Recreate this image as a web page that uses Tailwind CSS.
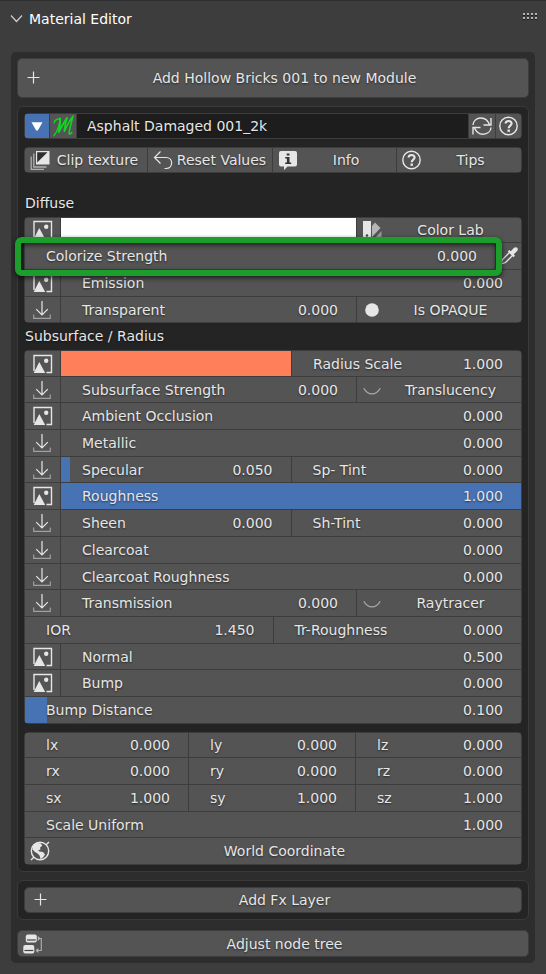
<!DOCTYPE html>
<html lang="en">
<head>
<meta charset="utf-8">
<meta name="viewport" content="width=device-width, initial-scale=1">
<title>Material Editor</title>
<script src="https://cdn.jsdelivr.net/npm/@tailwindcss/browser@4"></script>
</head>
<body class="min-h-screen bg-[#3d3d3d] font-['DejaVu_Sans',sans-serif] text-[14px] leading-5 text-[#e6e6e6] [text-shadow:0_1px_2px_#0008]">

<!-- Icon set -->
<svg class="hidden" aria-hidden="true">
  <symbol id="i-image" viewBox="0 0 20 20">
    <path d="M1 17V1.500H18.500V18.500H13.500" fill="none" stroke="#e6e6e6" stroke-width="1.400"/>
    <path d="M.7 19 6.300 8 12.200 19Z" fill="#e6e6e6"/><circle cx="13.200" cy="6.700" r="2.200" fill="#e6e6e6"/>
  </symbol>
  <symbol id="i-import" viewBox="0 0 20 20">
    <path d="M9 1V15M3.200 9.200 9 15 14.800 9.200" fill="none" stroke="#e6e6e6" stroke-width="1.200"/>
    <path d="M.7 14.500V18.300H17.300V14.500" fill="none" stroke="#a0a0a0" stroke-width="1.200"/>
  </symbol>
  <symbol id="i-plus" viewBox="0 0 20 20"><path d="M10.500 3.500V15.500M4.500 9.500H16.500" stroke="#e6e6e6" stroke-width="1.200"/></symbol>
  <symbol id="i-help" viewBox="0 0 20 20">
    <circle cx="9.500" cy="10" r="8.700" fill="none" stroke="#e6e6e6" stroke-width="1.400"/>
    <path d="M6.600 7.600C6.600 4.300 12.600 4.200 12.600 7.500C12.600 9.600 9.700 9.700 9.700 12.200" fill="none" stroke="#e6e6e6" stroke-width="2.100"/>
    <rect x="8.500" y="13.500" width="2.400" height="2.400" fill="#e6e6e6"/>
  </symbol>
  <symbol id="i-closed-eye" viewBox="0 0 20 20"><path d="M1.800 8.200C6 15.800 14 15.800 18.200 8.200" fill="none" stroke="#a8a8a8" stroke-width="1.300"/></symbol>
</svg>

<header class="flex items-center border-t border-[#303030] pt-2 pr-[9px] pl-[10px]">
  <button class="flex items-center gap-[6px] text-white" aria-expanded="true">
    <svg class="h-[14px] w-[13px]" viewBox="0 0 13 14"><path d="M1 3.500 6.500 9.500 12 3.500" fill="none" stroke="#cfcfcf" stroke-width="1.200"/></svg>
    Material Editor
  </button>
  <svg class="mr-0 mb-1 ml-auto h-[10px] w-[14px]" viewBox="0 0 14 10" aria-hidden="true">
    <g fill="#1c1c1c"><path d="M0 3h2v1H0zM4 3h2v1H4zM8 3h2v1H8zM12 3h2v1H12zM0 7h2v1H0zM4 7h2v1H4zM8 7h2v1H8zM12 7h2v1H12z"/></g>
    <g fill="#b4b4b4"><path d="M0 1h2v2H0zM4 1h2v2H4zM8 1h2v2H8zM12 1h2v2H12zM0 5h2v2H0zM4 5h2v2H4zM8 5h2v2H8zM12 5h2v2H12z"/></g>
  </svg>
</header>

<main class="mx-[11px] mt-[23px] mb-[10px] flex flex-col rounded-[5px] bg-[#2d2d2d] p-[6px]
  [&_input]:min-w-0 [&_input]:[text-shadow:0_1px_2px_#0008]
  [&_button]:min-w-0 [&_button]:whitespace-nowrap [&_button]:bg-[#545454] [&_button]:[text-shadow:0_1px_2px_#0008]
  [&_label]:relative [&_label]:flex [&_label]:min-w-0 [&_label]:flex-1 [&_label]:items-center [&_label]:bg-[#545454] [&_label]:pr-[18px] [&_label]:pl-[21px] [&_label]:whitespace-nowrap
  [&_label>span]:relative [&_label>input]:relative [&_label>input]:ml-auto [&_label>input]:w-12 [&_label>input]:text-right">

  <button class="flex h-10 items-center rounded-[5px] border border-[#3d3d3d] pl-[5px]">
    <svg class="-mr-0.5 size-5 shrink-0"><use href="#i-plus"/></svg><span class="flex-1">Add Hollow Bricks 001 to new Module</span>
  </button>

  <section class="mt-2 rounded-[6px] border border-[#3a3a3a] bg-[#242424] p-[6px]">
    <div class="flex h-[26px] gap-px overflow-hidden rounded-[5px] bg-[#3d3d3d] p-px">
      <button class="flex w-6 items-center justify-center bg-[#4772b3]!" aria-label="Collapse material">
        <svg class="h-[9px] w-3" viewBox="0 0 12 9"><path d="M.5 .3H11.500L6.800 8.400H5.200Z" fill="#fff"/></svg>
      </button>
      <button class="flex w-[26px] items-center justify-center" aria-label="Material library">
        <svg class="h-[22px] w-[22px]" viewBox="0 0 22 22"><g fill="none" stroke="#14d424" stroke-linecap="round" stroke-linejoin="round"><path d="M2.200 8C2.200 5 5 4 8.200 3.500C7.500 9 6 16 2 20.500" stroke-width="1.300"/><path d="M8.200 3.500C8.200 8 7.500 13 6.800 17C9.500 12 12 7 15 3" stroke-width="1.900"/><path d="M15 3C13.500 8 12.500 12 12.300 16.500C15 10.500 17.500 5 21 1.200C19.500 7 17.500 14 17 18.500C17.800 19.500 19 18.600 19.800 17.500" stroke-width="1.600"/></g></svg>
      </button>
      <input class="flex-1 bg-[#1d1d1d] pl-[10px] outline-none" aria-label="Material name" value="Asphalt Damaged 001_2k">
      <button class="flex w-[26px] items-center justify-center" aria-label="Refresh">
        <svg class="size-5" viewBox="0 0 20 20"><path d="M1 9C1.500 1 13.500-1.500 17.500 8.500M19 2V9H11.500M19 11.500C18.500 19 6.500 21.500 2.500 12M1 18.500V11.500H8.500" fill="none" stroke="#e6e6e6" stroke-width="1.400"/></svg>
      </button>
      <button class="flex w-[25px] items-center justify-center" aria-label="Help"><svg class="size-5"><use href="#i-help"/></svg></button>
    </div>

    <div class="mt-2 grid h-[26px] grid-cols-[122fr_124fr_123fr_124fr] gap-px overflow-hidden rounded-[5px] bg-[#3d3d3d] p-px">
      <button class="flex items-center pl-[5px]">
        <svg class="-mr-0.5 size-5 shrink-0" viewBox="0 0 20 20"><rect x="6" y="1" width="13.500" height="13.500" fill="#e6e6e6"/><path d="M7.200 2.200H17.500L7.200 12.500Z" fill="#2e2e2e"/><path d="M3.800 3.500V17H16.500M1.200 6.500V19.300H14" fill="none" stroke="#b0b0b0" stroke-width="1.300"/></svg><span class="flex-1">Clip texture</span>
      </button>
      <button class="flex items-center pl-[5px]">
        <svg class="-mr-0.5 size-5 shrink-0" viewBox="0 0 20 20"><path d="M7.500 1.500 1.500 7.500 7.500 13.500M1.500 7.500H13C20.500 7.500 20.500 18.500 13 18.500H11.500" fill="none" stroke="#e6e6e6" stroke-width="1.200"/></svg><span class="flex-1">Reset Values</span>
      </button>
      <button class="flex items-center pl-[5px]">
        <svg class="-mr-0.5 size-5 shrink-0" viewBox="0 0 20 20"><path d="M3 1H17Q19 1 19 3V14.500Q19 16.500 17 16.500H9.500L6 20V16.500H3Q1 16.500 1 14.500V3Q1 1 3 1Z" fill="#e6e6e6"/><path d="M8.700 3.500H11.500V5.500H8.700ZM7.200 7H11.500V12.500H13.200V14H7.200V12.500H8.900V8.500H7.200Z" fill="#333"/></svg><span class="flex-1">Info</span>
      </button>
      <button class="flex items-center pl-[5px]">
        <svg class="-mr-0.5 size-5 shrink-0"><use href="#i-help"/></svg><span class="flex-1">Tips</span>
      </button>
    </div>

    <h2 class="mt-5 pl-px">Diffuse</h2>
    <div class="relative mt-1">
      <div class="grid auto-rows-[24px_26px_26px_25px] gap-px overflow-hidden rounded-[5px] bg-[#3d3d3d] p-px">
        <div class="grid grid-cols-[331fr_164fr] gap-px">
          <div class="flex gap-px">
            <button class="flex w-[35px] items-center justify-center" aria-label="Diffuse texture"><svg class="size-5"><use href="#i-image"/></svg></button>
            <input type="color" value="#ffffff" aria-label="Diffuse color" class="h-full flex-1 appearance-none [&::-webkit-color-swatch]:border-0 [&::-webkit-color-swatch]:rounded-none [&::-webkit-color-swatch-wrapper]:p-0">
          </div>
          <button class="flex items-center pl-[5px]">
            <svg class="-mr-0.5 size-5 shrink-0" viewBox="0 0 20 20"><path d="M1 1H9V19H1Z" fill="#e6e6e6"/><circle cx="5" cy="15.500" r="1.200" fill="#444"/><path d="M10 6 13 2.500 18.500 8 10 17Z" fill="#b5b5b5"/><path d="M12 19 19.500 11V19Z" fill="#999"/></svg><span class="flex-1">Color Lab</span>
          </button>
        </div>
        <div class="flex gap-px">
          <label><span>Colorize Strength</span><input value="0.000"></label>
          <button class="flex w-[25px] items-center justify-center" aria-label="Pick color">
            <svg class="size-5" viewBox="0 0 20 20"><path d="M10.500 6.500 3.500 13.500 2 18 6.500 16.500 13.500 9.500" fill="none" stroke="#e6e6e6" stroke-width="1.300"/><path d="M8.800 5.500 10.300 4 11.800 5.200 15 1.800C17.500 0 20 2.500 18.200 5L14.800 8.200 16 9.700 14.500 11.200Z" fill="#e6e6e6"/></svg>
          </button>
        </div>
        <div class="flex gap-px">
          <button class="flex w-[35px] items-center justify-center" aria-label="Emission texture"><svg class="size-5"><use href="#i-image"/></svg></button>
          <label><span>Emission</span><input value="0.000"></label>
        </div>
        <div class="grid grid-cols-[331fr_164fr] gap-px">
          <div class="flex gap-px">
            <button class="flex w-[35px] items-center justify-center" aria-label="Load transparent texture"><svg class="size-5"><use href="#i-import"/></svg></button>
            <label><span>Transparent</span><input value="0.000"></label>
          </div>
          <button class="flex items-center pl-[5px]">
            <svg class="-mr-0.5 size-5 shrink-0" viewBox="0 0 20 20"><circle cx="10" cy="10" r="6.800" fill="#e6e6e6"/></svg><span class="flex-1">Is OPAQUE</span>
          </button>
        </div>
      </div>
      <!-- Callout around the colorize strength slider -->
      <div class="pointer-events-none absolute top-5 right-5 -left-[9px] h-[39px] rounded-[7px] border-6 border-[#1b9e2b] shadow-[0_2px_5px_#000a,inset_0_2px_5px_#000a]"></div>
    </div>

    <h2 class="mt-[3px] pl-px">Subsurface / Radius</h2>
    <div class="mt-1 grid auto-rows-[25px_25px_26px_26px_25px_26px_26px_26px_25px_26px_26px_25px_26px_26px] gap-px overflow-hidden rounded-[5px] bg-[#3d3d3d] p-px">
      <div class="grid grid-cols-[266fr_229fr] gap-px">
        <div class="flex gap-px">
          <button class="flex w-[35px] items-center justify-center" aria-label="Subsurface texture"><svg class="size-5"><use href="#i-image"/></svg></button>
          <input type="color" value="#ff7f5a" aria-label="Subsurface color" class="h-full flex-1 appearance-none [&::-webkit-color-swatch]:border-0 [&::-webkit-color-swatch]:rounded-none [&::-webkit-color-swatch-wrapper]:p-0">
        </div>
        <label><span>Radius Scale</span><input value="1.000"></label>
      </div>
      <div class="grid grid-cols-[331fr_164fr] gap-px">
        <div class="flex gap-px">
          <button class="flex w-[35px] items-center justify-center" aria-label="Load subsurface texture"><svg class="size-5"><use href="#i-import"/></svg></button>
          <label><span>Subsurface Strength</span><input value="0.000"></label>
        </div>
        <button class="flex items-center pl-[5px]"><svg class="-mr-0.5 size-5 shrink-0"><use href="#i-closed-eye"/></svg><span class="flex-1">Translucency</span></button>
      </div>
      <div class="flex gap-px">
        <button class="flex w-[35px] items-center justify-center" aria-label="Ambient occlusion texture"><svg class="size-5"><use href="#i-image"/></svg></button>
        <label><span>Ambient Occlusion</span><input value="0.000"></label>
      </div>
      <div class="flex gap-px">
        <button class="flex w-[35px] items-center justify-center" aria-label="Load metallic texture"><svg class="size-5"><use href="#i-import"/></svg></button>
        <label><span>Metallic</span><input value="0.000"></label>
      </div>
      <div class="flex gap-px">
        <button class="flex w-[35px] items-center justify-center" aria-label="Load specular texture"><svg class="size-5"><use href="#i-import"/></svg></button>
        <label><i class="absolute inset-y-0 left-0 bg-[#4772b3]" style="width:4%"></i><span>Specular</span><input value="0.050"></label>
        <label><span>Sp- Tint</span><input value="0.000"></label>
      </div>
      <div class="flex gap-px">
        <button class="flex w-[35px] items-center justify-center" aria-label="Roughness texture"><svg class="size-5"><use href="#i-image"/></svg></button>
        <label><i class="absolute inset-y-0 left-0 bg-[#4772b3]" style="width:100%"></i><span>Roughness</span><input value="1.000"></label>
      </div>
      <div class="flex gap-px">
        <button class="flex w-[35px] items-center justify-center" aria-label="Load sheen texture"><svg class="size-5"><use href="#i-import"/></svg></button>
        <label><span>Sheen</span><input value="0.000"></label>
        <label><span>Sh-Tint</span><input value="0.000"></label>
      </div>
      <div class="flex gap-px">
        <button class="flex w-[35px] items-center justify-center" aria-label="Load clearcoat texture"><svg class="size-5"><use href="#i-import"/></svg></button>
        <label><span>Clearcoat</span><input value="0.000"></label>
      </div>
      <div class="flex gap-px">
        <button class="flex w-[35px] items-center justify-center" aria-label="Load clearcoat roughness texture"><svg class="size-5"><use href="#i-import"/></svg></button>
        <label><span>Clearcoat Roughness</span><input value="0.000"></label>
      </div>
      <div class="grid grid-cols-[331fr_164fr] gap-px">
        <div class="flex gap-px">
          <button class="flex w-[35px] items-center justify-center" aria-label="Load transmission texture"><svg class="size-5"><use href="#i-import"/></svg></button>
          <label><span>Transmission</span><input value="0.000"></label>
        </div>
        <button class="flex items-center pl-[5px]"><svg class="-mr-0.5 size-5 shrink-0"><use href="#i-closed-eye"/></svg><span class="flex-1">Raytracer</span></button>
      </div>
      <div class="flex gap-px">
        <label><span>IOR</span><input value="1.450"></label>
        <label><span>Tr-Roughness</span><input value="0.000"></label>
      </div>
      <div class="flex gap-px">
        <button class="flex w-[35px] items-center justify-center" aria-label="Normal texture"><svg class="size-5"><use href="#i-image"/></svg></button>
        <label><span>Normal</span><input value="0.500"></label>
      </div>
      <div class="flex gap-px">
        <button class="flex w-[35px] items-center justify-center" aria-label="Bump texture"><svg class="size-5"><use href="#i-image"/></svg></button>
        <label><span>Bump</span><input value="0.000"></label>
      </div>
      <div class="flex">
        <label><i class="absolute inset-y-0 left-0 bg-[#4772b3]" style="width:4.5%"></i><span>Bump Distance</span><input value="0.100"></label>
      </div>
    </div>

    <div class="mt-2 grid auto-rows-[24px_26px_26px_25px_26px] gap-px overflow-hidden rounded-[5px] bg-[#3d3d3d] p-px">
      <div class="grid grid-cols-[163fr_166fr_165fr] gap-px">
        <label><span>lx</span><input value="0.000"></label>
        <label><span>ly</span><input value="0.000"></label>
        <label><span>lz</span><input value="0.000"></label>
      </div>
      <div class="grid grid-cols-[163fr_166fr_165fr] gap-px">
        <label><span>rx</span><input value="0.000"></label>
        <label><span>ry</span><input value="0.000"></label>
        <label><span>rz</span><input value="0.000"></label>
      </div>
      <div class="grid grid-cols-[163fr_166fr_165fr] gap-px">
        <label><span>sx</span><input value="1.000"></label>
        <label><span>sy</span><input value="1.000"></label>
        <label><span>sz</span><input value="1.000"></label>
      </div>
      <div class="flex"><label><span>Scale Uniform</span><input value="1.000"></label></div>
      <button class="flex items-center pl-[5px]">
        <svg class="-mr-0.5 size-5 shrink-0" viewBox="0 0 20 20"><circle cx="10" cy="10" r="8.700" fill="none" stroke="#e6e6e6" stroke-width="1.400"/><path d="M1 19 3.800 16.200M16.200 3.800 19 1" stroke="#e6e6e6" stroke-width="1.400"/><path d="M2.500 5.500 6 2 10.500 2.200 12.300 4.500 10 6.800 10.500 8.500 8 9.500 9.500 10.500 13 11 15 13.500 13 16.500 10.500 18 9.500 14.500 7.500 12.500 5 11 2.500 8.500Z" fill="#e6e6e6"/></svg><span class="flex-1">World Coordinate</span>
      </button>
    </div>
  </section>

  <section class="mt-2 rounded-[6px] border border-[#3a3a3a] bg-[#242424] p-[6px]">
    <button class="flex h-[26px] w-full items-center rounded-[5px] border border-[#3d3d3d] pl-[5px]">
      <svg class="-mr-0.5 size-5 shrink-0"><use href="#i-plus"/></svg><span class="flex-1">Add Fx Layer</span>
    </button>
  </section>

  <button class="mt-[10px] flex h-[27px] items-center rounded-[5px] border border-[#3d3d3d] pl-[5px]">
    <svg class="-mr-0.5 size-5 shrink-0" viewBox="0 0 20 20"><rect x="2.800" y=".5" width="11" height="8" rx="2" fill="#e6e6e6"/><path d="M4 6H12.800" stroke="#444" stroke-width="1.200"/><rect x=".3" y="11" width="11" height="8.500" rx="2" fill="#e6e6e6"/><path d="M1.500 16.500H10.300" stroke="#444" stroke-width="1.200"/><path d="M16 4.500H18.300V16.500H13.500" fill="none" stroke="#aaa" stroke-width="1.200"/><path d="M14.800 2 17.500 4.500 14.800 7ZM15.300 14 12.500 16.500 15.300 19Z" fill="#b8b8b8"/></svg><span class="flex-1">Adjust node tree</span>
  </button>
</main>
</body>
</html>
